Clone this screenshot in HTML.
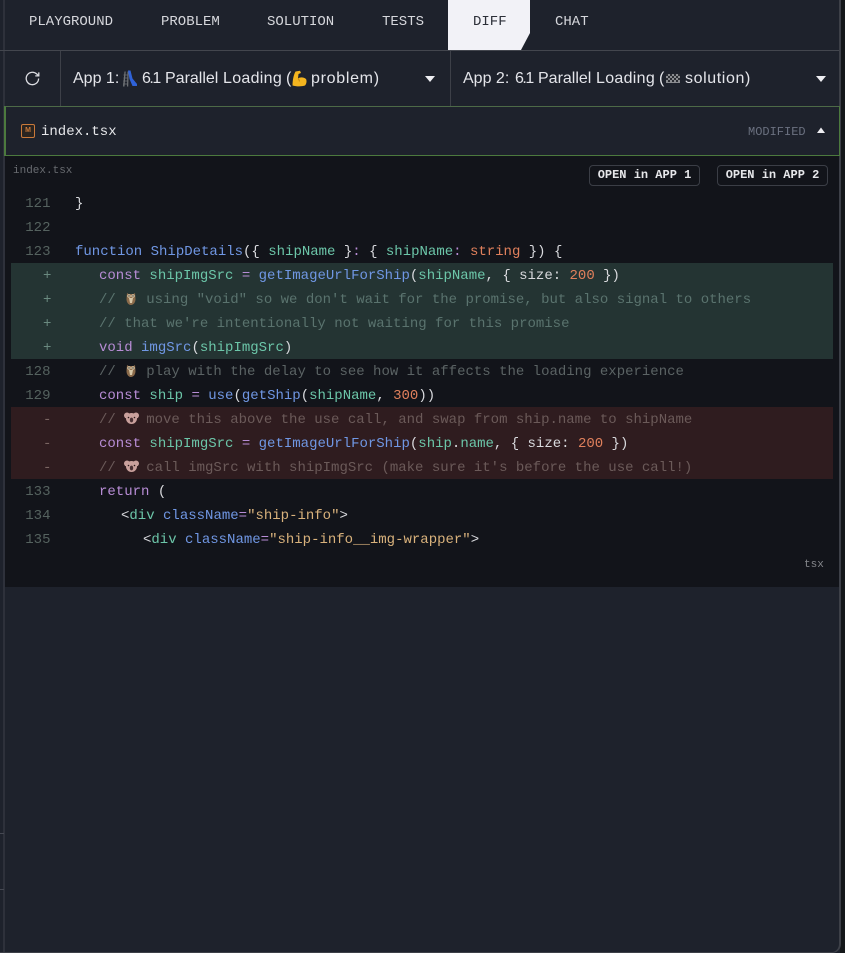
<!DOCTYPE html>
<html>
<head>
<meta charset="utf-8">
<style>
html,body{margin:0;padding:0;background:#1e222c}
body{width:845px;height:953px;position:relative;overflow:hidden;font-family:"Liberation Mono",monospace}
.a{position:absolute}
.t{position:absolute;top:12px;height:20px;line-height:20px;font-size:14px;color:#d6d7dc;white-space:pre}
.s{position:absolute;top:67px;height:24px;line-height:24px;font-size:16px;color:#e4e5ea;white-space:pre;font-family:"Liberation Sans",sans-serif}
.l{position:absolute;left:0;width:838px;height:24px;margin-top:1px;line-height:24px;font-size:14px;white-space:pre;color:#d9dade}
.n{position:absolute;left:10px;width:40.5px;text-align:right;color:#55625f}
.m{position:absolute;left:43px;color:#6a8a80}
.m.r{color:#7a6562}
.c{position:absolute}
.k{color:#b88dd6}.f{color:#7097e4}.v{color:#6cc6a9}.o{color:#b88dd6}.u{color:#e0805c}.q{color:#d9b27c}.g{color:#5b6364}
.ga{color:#5a736e}.ra{color:#6b5a59}
.e{display:inline-block;width:13.6px;height:14px;vertical-align:-2px}
.e svg{display:block}
.btn{position:absolute;top:165px;width:109px;height:19px;border:1px solid #3b3e46;border-radius:4px;background:#12141a;color:#e6e7ea;font-weight:bold;font-size:12px;line-height:18px;text-align:center;white-space:pre}
</style>
</head>
<body>
<!-- frame -->
<div class="a" style="left:3px;top:0;width:2px;height:953px;background:#2e313b"></div>
<div class="a" style="left:0;top:833px;width:4px;height:1px;background:#454852"></div>
<div class="a" style="left:0;top:889px;width:4px;height:1px;background:#454852"></div>
<div class="a" style="left:840px;top:0;width:5px;height:953px;background:#14171a"></div>
<div class="a" style="left:0;top:0;width:841px;height:953px;box-sizing:border-box;border-right:2px solid #3d4048;border-bottom:1px solid #3d4048;border-bottom-right-radius:9px"></div>

<!-- tabs -->
<div class="a" style="left:448px;top:0;width:82px;height:50px;background:#f2f2f7;clip-path:polygon(0 0,100% 0,100% 33px,73px 100%,0 100%)"></div>
<div class="t" style="left:29px">PLAYGROUND</div>
<div class="t" style="left:161px">PROBLEM</div>
<div class="t" style="left:267px">SOLUTION</div>
<div class="t" style="left:382px">TESTS</div>
<div class="t" style="left:473px;color:#2c2f38">DIFF</div>
<div class="t" style="left:555px">CHAT</div>
<div class="a" style="left:0;top:50px;width:839px;height:1px;background:#43464e"></div>

<!-- select row -->
<div class="a" style="left:60px;top:51px;width:1px;height:55px;background:#3d4048"></div>
<div class="a" style="left:450px;top:51px;width:1px;height:55px;background:#3d4048"></div>
<svg class="a" style="left:24px;top:70px" width="17" height="17" viewBox="0 0 17 17" fill="none" stroke="#dcdde2" stroke-width="1.3"><path d="M14.600 8.500a6.200 6.200 0 1 1-2-4.600l2 1.800"/><path d="M14.800 2.400v3.500h-3.500"/></svg>

<div class="s" style="left:73px">App 1:</div>
<svg class="a" style="left:122px;top:70px" width="16" height="17" viewBox="0 0 16 17"><path d="M1 16.500L2.500 1.500h1.200L2.500 16.500zM5 16.500L5.500 1.500h1.200L6.200 16.500z" fill="#6f7276"/><path d="M1.500 5h5M1.500 8h5M1.200 11h5M1 14h5" stroke="#6f7276" stroke-width=".8"/><path d="M6 .5h2.500l2 8 4.500 5.500v2h-4.500L7.500 9z" fill="#2f62d8"/></svg>
<div class="s" style="left:142px;letter-spacing:-1.5px">6.1</div>
<div class="s" style="left:165px">Parallel</div>
<div class="s" style="left:223px;letter-spacing:.3px">Loading</div>
<div class="s" style="left:286px">(</div>
<svg class="a" style="left:291px;top:70px" width="17" height="17" viewBox="0 0 17 17"><path d="M4.500 1.500L9 .8l1 2.200-2.500 1L7 8.500c2-1.500 5.500-1.500 8 .5 1 2 .5 5-1 6.500-3 1-8 1.300-12.500 0C1.500 10.500 2.500 5 4.500 1.500z" fill="#f4b51f"/><path d="M7 8.500c1 1 1.500 2 1.500 3" stroke="#c98a10" fill="none"/></svg>
<div class="s" style="left:311px;letter-spacing:.7px">problem)</div>
<svg class="a" style="left:425px;top:76px" width="10" height="6"><path d="M0 0h10L5 6z" fill="#eeeef2"/></svg>

<div class="s" style="left:463px">App 2:</div>
<div class="s" style="left:515px;letter-spacing:-1.5px">6.1</div>
<div class="s" style="left:538px">Parallel</div>
<div class="s" style="left:596px;letter-spacing:.3px">Loading</div>
<div class="s" style="left:659px">(</div>
<svg class="a" style="left:665px;top:72px" width="16" height="14" viewBox="0 0 16 14"><rect x="1" y="2" width="14" height="9" fill="#8a8c90"/><path d="M1 2h2v2H1zM5 2h2v2H5zM9 2h2v2H9zM13 2h2v2h-2zM3 4h2v2H3zM7 4h2v2H7zM11 4h2v2h-2zM1 6h2v2H1zM5 6h2v2H5zM9 6h2v2H9zM13 6h2v2h-2zM3 8h2v2H3zM7 8h2v2H7zM11 8h2v2h-2z" fill="#2b2d33"/></svg>
<div class="s" style="left:685px;letter-spacing:.6px">solution)</div>
<svg class="a" style="left:816px;top:76px" width="10" height="6"><path d="M0 0h10L5 6z" fill="#eeeef2"/></svg>

<!-- file header -->
<div class="a" style="left:4px;top:106px;width:836px;height:50px;box-sizing:border-box;border:1px solid #4c7a3e;border-left-width:2px;border-top-color:#4d6a47;background:#1e222c"></div>
<div class="a" style="left:21px;top:124px;width:14px;height:14px;box-sizing:border-box;border:1px solid #c9793a;border-radius:2px;background:#2a2420;color:#c9793a;font-size:7px;font-weight:bold;line-height:12px;text-align:center;font-family:'Liberation Sans',sans-serif">M</div>
<div class="a" style="left:41px;top:122px;height:20px;line-height:20px;font-size:14px;color:#e6e7ea">index.tsx</div>
<div class="a" style="left:748px;top:122px;height:20px;line-height:20px;font-size:12px;color:#6b7180">MODIFIED</div>
<svg class="a" style="left:817px;top:127px" width="8" height="7"><path d="M0 6h8L4 .5z" fill="#eeeef2"/></svg>

<!-- code panel -->
<div class="a" style="left:5px;top:156px;width:834px;height:431px;background:#12141a"></div>
<div class="a" style="left:13px;top:161px;height:20px;line-height:20px;font-size:11px;color:#686b70">index.tsx</div>
<div class="btn" style="left:589px">OPEN in APP 1</div>
<div class="btn" style="left:717px">OPEN in APP 2</div>

<div class="a" style="left:11px;top:263px;width:822px;height:96px;background:#243433"></div>
<div class="a" style="left:11px;top:407px;width:822px;height:72px;background:#2f1c1f"></div>

<div class="l" style="top:191px"><span class="n">121</span><span class="c" style="left:75px">}</span></div>
<div class="l" style="top:215px"><span class="n">122</span></div>
<div class="l" style="top:239px"><span class="n">123</span><span class="c" style="left:75px"><span class="f">function ShipDetails</span>({ <span class="v">shipName</span> }<span class="o">:</span> { <span class="v">shipName</span><span class="o">:</span> <span class="u">string</span> }) {</span></div>

<div class="l" style="top:263px"><span class="m">+</span><span class="c" style="left:99px"><span class="k">const</span> <span class="v">shipImgSrc</span> <span class="o">=</span> <span class="f">getImageUrlForShip</span>(<span class="v">shipName</span>, { size: <span class="u">200</span> })</span></div>
<div class="l" style="top:287px"><span class="m">+</span><span class="c ga" style="left:99px">// <span class="e"><svg width="14" height="15" viewBox="0 0 14 15"><path d="M3 2l1.500 1h5L11 2l.5 6c0 3.500-2 6-4.500 6S2.500 11.500 2.500 8z" fill="#8a6a4a"/><path d="M5 7h4l-1 5H6z" fill="#d8c8a8"/><circle cx="5" cy="5" r="1.600" fill="#e8d8b8"/><circle cx="9" cy="5" r="1.600" fill="#e8d8b8"/><circle cx="5" cy="5" r=".7" fill="#222"/><circle cx="9" cy="5" r=".7" fill="#222"/></svg></span> using "void" so we don't wait for the promise, but also signal to others</span></div>
<div class="l" style="top:311px"><span class="m">+</span><span class="c ga" style="left:99px">// that we're intentionally not waiting for this promise</span></div>
<div class="l" style="top:335px"><span class="m">+</span><span class="c" style="left:99px"><span class="k">void</span> <span class="f">imgSrc</span>(<span class="v">shipImgSrc</span>)</span></div>

<div class="l" style="top:359px"><span class="n">128</span><span class="c g" style="left:99px">// <span class="e"><svg width="14" height="15" viewBox="0 0 14 15"><path d="M3 2l1.500 1h5L11 2l.5 6c0 3.500-2 6-4.500 6S2.500 11.500 2.500 8z" fill="#8a6a4a"/><path d="M5 7h4l-1 5H6z" fill="#d8c8a8"/><circle cx="5" cy="5" r="1.600" fill="#e8d8b8"/><circle cx="9" cy="5" r="1.600" fill="#e8d8b8"/><circle cx="5" cy="5" r=".7" fill="#222"/><circle cx="9" cy="5" r=".7" fill="#222"/></svg></span> play with the delay to see how it affects the loading experience</span></div>
<div class="l" style="top:383px"><span class="n">129</span><span class="c" style="left:99px"><span class="k">const</span> <span class="v">ship</span> <span class="o">=</span> <span class="f">use</span>(<span class="f">getShip</span>(<span class="v">shipName</span>, <span class="u">300</span>))</span></div>

<div class="l" style="top:407px"><span class="m r">-</span><span class="c ra" style="left:99px">// <span class="e"><svg width="15" height="14" viewBox="0 0 15 14"><circle cx="3" cy="4.500" r="3" fill="#c9a09c"/><circle cx="12" cy="4.500" r="3" fill="#c9a09c"/><ellipse cx="7.500" cy="7.500" rx="5.500" ry="5.500" fill="#c9a09c"/><ellipse cx="7.500" cy="9" rx="1.700" ry="2.400" fill="#4a3033"/><circle cx="4.500" cy="6.500" r=".8" fill="#2a1a1a"/><circle cx="10.500" cy="6.500" r=".8" fill="#2a1a1a"/></svg></span> move this above the use call, and swap from ship.name to shipName</span></div>
<div class="l" style="top:431px"><span class="m r">-</span><span class="c" style="left:99px"><span class="k">const</span> <span class="v">shipImgSrc</span> <span class="o">=</span> <span class="f">getImageUrlForShip</span>(<span class="v">ship</span>.<span class="v">name</span>, { size: <span class="u">200</span> })</span></div>
<div class="l" style="top:455px"><span class="m r">-</span><span class="c ra" style="left:99px">// <span class="e"><svg width="15" height="14" viewBox="0 0 15 14"><circle cx="3" cy="4.500" r="3" fill="#c9a09c"/><circle cx="12" cy="4.500" r="3" fill="#c9a09c"/><ellipse cx="7.500" cy="7.500" rx="5.500" ry="5.500" fill="#c9a09c"/><ellipse cx="7.500" cy="9" rx="1.700" ry="2.400" fill="#4a3033"/><circle cx="4.500" cy="6.500" r=".8" fill="#2a1a1a"/><circle cx="10.500" cy="6.500" r=".8" fill="#2a1a1a"/></svg></span> call imgSrc with shipImgSrc (make sure it's before the use call!)</span></div>

<div class="l" style="top:479px"><span class="n">133</span><span class="c" style="left:99px"><span class="k">return</span> (</span></div>
<div class="l" style="top:503px"><span class="n">134</span><span class="c" style="left:121px">&lt;<span class="v">div</span> <span class="f">className</span><span class="o">=</span><span class="q">"ship-info"</span>&gt;</span></div>
<div class="l" style="top:527px"><span class="n">135</span><span class="c" style="left:143px">&lt;<span class="v">div</span> <span class="f">className</span><span class="o">=</span><span class="q">"ship-info__img-wrapper"</span>&gt;</span></div>

<div class="a" style="left:804px;top:555px;height:20px;line-height:20px;font-size:11px;color:#85878c">tsx</div>
</body>
</html>
